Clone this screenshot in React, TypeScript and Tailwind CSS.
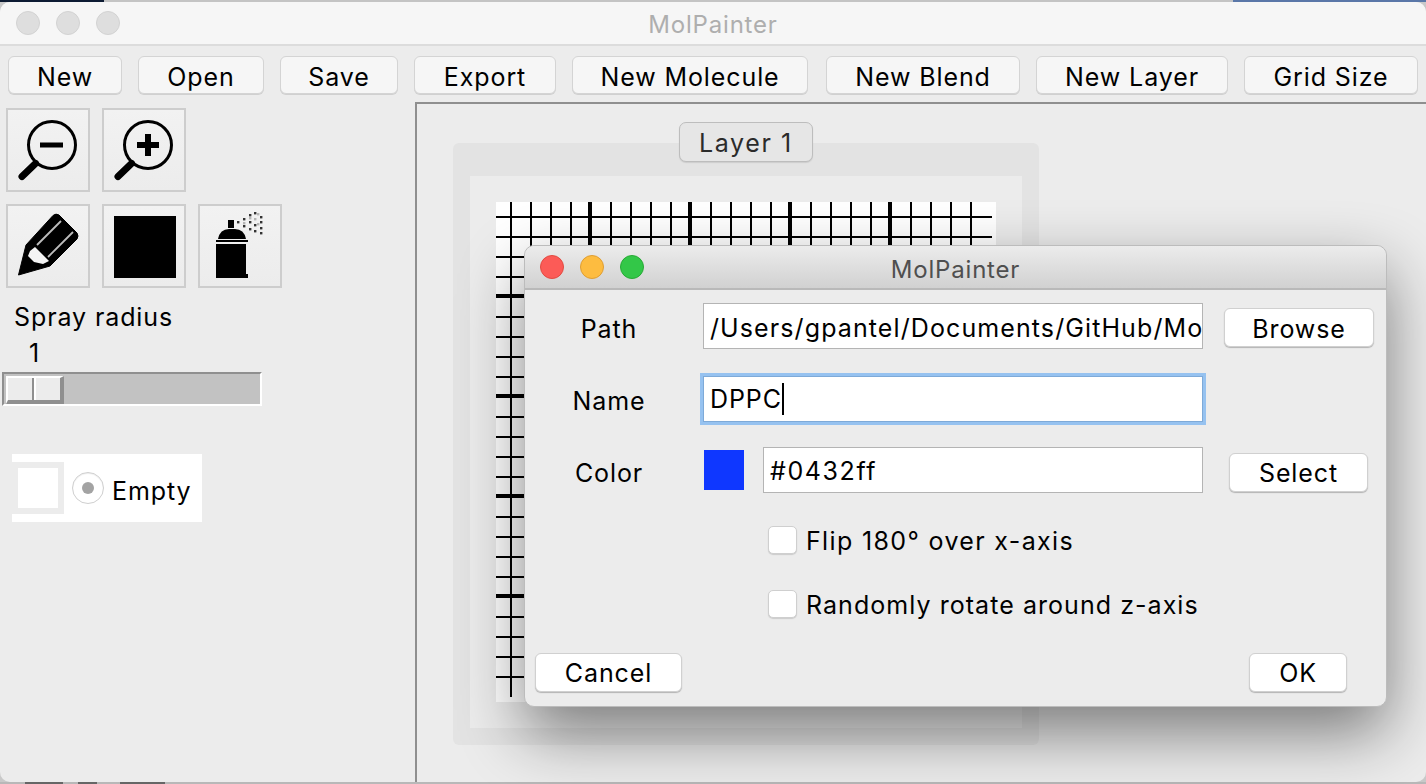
import React from "react";

const font = "font-['Inter','Liberation_Sans',sans-serif]";

function ToolBtn({ label, w, mr }: { label: string; w: string; mr: string }) {
  return (
    <div className={`${w} ${mr} h-[38px] shrink-0 rounded-[6px] border border-[#d4d4d4] bg-[#f6f6f6] shadow-[0_1px_0_#d0d0d0] flex items-center justify-center pt-[6px] text-black`}>
      {label}
    </div>
  );
}

function IconBox({ children }: { children: React.ReactNode }) {
  return (
    <div className="w-[84px] h-[84px] shrink-0 border-2 border-[#cdcdcd] bg-gradient-to-b from-[#f2f2f2] to-[#ececec]">
      <svg viewBox="2 2 80 80" className="block w-20 h-20">{children}</svg>
    </div>
  );
}

function Magnifier({ plus }: { plus?: boolean }) {
  return (
    <g>
      <circle cx="46" cy="37" r="23.5" fill="none" stroke="#000" strokeWidth="3" />
      <path d="M32 53 L27 58" stroke="#000" strokeWidth="3.5" />
      <path d="M29 56 L16 68.5" stroke="#000" strokeWidth="7" strokeLinecap="round" />
      {plus ? (
        <path d="M35 37 H57 M46 26 V48" stroke="#000" strokeWidth="6" />
      ) : (
        <rect x="34" y="34.5" width="23" height="5" fill="#000" />
      )}
    </g>
  );
}

function Pencil() {
  return (
    <g>
      <path d="M12.5 71 L20 41 L47 11.5 Q50 9 53 11 L71 29 Q73 32 71 35 L44 62 Z" fill="#000" stroke="#000" strokeWidth="1" strokeLinejoin="round" />
      <path d="M24 47 L29 43 L43 57 L37 60 L28 58 L22 52 Z" fill="#f4f4f4" />
      <path d="M31 41 L55 17 M42 53 L67 28" stroke="#bdbdbd" strokeWidth="1.8" />
    </g>
  );
}

function Spray() {
  const dark: [number, number][] = [[40, 18], [46, 15], [46, 22], [52, 11], [52, 18], [52, 25], [57, 9], [57, 21], [57, 27], [63, 13], [63, 18], [63, 24], [63, 29]];
  const light: [number, number][] = [[57, 15], [52, 14], [46, 19], [60, 10], [60, 20]];
  return (
    <g>
      <rect x="30" y="16" width="6" height="8" fill="#000" />
      <path d="M20 35 Q22 25 31 25 H37 Q46 25 48 35 Z" fill="#000" />
      <rect x="18" y="36" width="32" height="2" fill="#000" />
      <path d="M18 40 H48 V70 H50 V74 H18 Z" fill="#000" />
      {dark.map(([x, y]) => <rect key={`d${x}-${y}`} x={x - 1} y={y - 1} width="2.4" height="2.4" fill="#333" />)}
      {light.map(([x, y]) => <rect key={`l${x}-${y}`} x={x - 1} y={y - 1} width="2.4" height="2.4" fill="#b5b5b5" />)}
    </g>
  );
}

function Grid() {
  const idx = Array.from({ length: 24 }, (_, i) => i);
  const thin = idx.filter((i) => (i + 1) % 5 !== 0);
  const thick = idx.filter((i) => (i + 1) % 5 === 0);
  return (
    <svg viewBox="0 0 500 500" className="block w-[500px] h-[500px] bg-white">
      {thin.map((i) => (
        <line key={`v${i}`} x1={15 + 20 * i} x2={15 + 20 * i} y1="0" y2="495" stroke="#000" strokeWidth="2" />
      ))}
      {thick.map((i) => (
        <line key={`V${i}`} x1={14 + 20 * i} x2={14 + 20 * i} y1="0" y2="495" stroke="#000" strokeWidth="4" />
      ))}
      {thin.map((i) => (
        <line key={`h${i}`} y1={15 + 20 * i} y2={15 + 20 * i} x1="0" x2="496" stroke="#000" strokeWidth="2" />
      ))}
      {thick.map((i) => (
        <line key={`H${i}`} y1={14 + 20 * i} y2={14 + 20 * i} x1="0" x2="496" stroke="#000" strokeWidth="4" />
      ))}
    </svg>
  );
}

function DlgBtn({ label, w, pt }: { label: string; w: string; pt: string }) {
  return (
    <div className={`${w} ${pt} h-[39px] shrink-0 rounded-[6px] border border-[#d0d0d0] bg-white shadow-[0_1px_1px_#b4b4b4] flex items-center justify-center text-black`}>
      {label}
    </div>
  );
}

function Light({ c, b }: { c: string; b: string }) {
  return <div className={`w-6 h-6 rounded-full border ${c} ${b}`} />;
}

function Check({ label, mt, track }: { label: string; mt: string; track: string }) {
  return (
    <div className={`flex items-center ${mt} pl-[243px]`}>
      <div className="w-[29px] h-[28px] rounded-[5px] border border-[#cfcfcf] bg-white shadow-[0_1px_1px_#cccccc]" />
      <span className={`ml-[9px] pt-1 text-black ${track}`}>{label}</span>
    </div>
  );
}

export default function App() {
  return (
    <div className={`relative w-[1426px] h-[784px] overflow-hidden bg-[#c9c9c9] flex flex-col text-[25px] leading-none tracking-[0.9px] ${font}`}>
      <div className="flex h-[2px] shrink-0">
        <div className="w-[104px] bg-[#0d1b33]" />
        <div className="flex-1 bg-[#c4c4c4]" />
        <div className="w-[193px] bg-[#5a77a8]" />
      </div>
      <div className="flex-1 min-h-0 flex flex-col rounded-t-[10px] rounded-b-[10px] bg-[#ececec] overflow-hidden">
        {/* title bar */}
        <div className="h-[44px] shrink-0 flex items-center relative bg-[#f6f6f6] border-b-2 border-[#dcdcdc]">
          <div className="flex gap-4 pl-4">
            <Light c="bg-[#dedede]" b="border-[#d2d2d2]" />
            <Light c="bg-[#dedede]" b="border-[#d2d2d2]" />
            <Light c="bg-[#dedede]" b="border-[#d2d2d2]" />
          </div>
          <div className="absolute inset-0 flex items-center justify-center pt-1 text-[#aeaeae] text-[24px] tracking-[0.8px]">MolPainter</div>
        </div>
        {/* toolbar */}
        <div className="h-[56px] shrink-0 flex items-center pl-2 pt-[1px]">
          <ToolBtn label="New" w="w-[114px]" mr="mr-4" />
          <ToolBtn label="Open" w="w-[126px]" mr="mr-4" />
          <ToolBtn label="Save" w="w-[118px]" mr="mr-4" />
          <ToolBtn label="Export" w="w-[142px]" mr="mr-4" />
          <ToolBtn label="New Molecule" w="w-[236px]" mr="mr-[18px]" />
          <ToolBtn label="New Blend" w="w-[194px]" mr="mr-4" />
          <ToolBtn label="New Layer" w="w-[192px]" mr="mr-4" />
          <ToolBtn label="Grid Size" w="w-[174px]" mr="mr-0" />
        </div>
        {/* main */}
        <div className="flex-1 min-h-0 flex">
          {/* sidebar */}
          <div className="w-[415px] shrink-0 pt-[6px] text-black">
            <div className="flex gap-3 pl-[6px]">
              <IconBox><Magnifier /></IconBox>
              <IconBox><Magnifier plus /></IconBox>
            </div>
            <div className="flex gap-3 pl-[6px] mt-3">
              <IconBox><Pencil /></IconBox>
              <IconBox><rect x="12" y="12" width="62" height="62" fill="#000" /></IconBox>
              <IconBox><Spray /></IconBox>
            </div>
            <div className="pl-[14px] mt-[17px] h-[24px] flex items-center">Spray radius</div>
            <div className="pl-[29px] mt-[12px] h-[24px] flex items-center">1</div>
            {/* slider */}
            <div className="ml-[2px] mt-[7px] w-[260px] h-[34px] border-t-2 border-l-2 border-t-[#8f8f8f] border-l-[#8f8f8f] border-b-2 border-r-2 border-b-white border-r-white bg-[#c2c2c2] pl-[2px] pt-[2px]">
              <div className="w-[58px] h-[28px] flex border-t-2 border-l-2 border-t-white border-l-white border-b-[4px] border-r-[4px] border-b-[#8f8f8f] border-r-[#8f8f8f] bg-[#ececec]">
                <div className="w-[26px] border-r-2 border-r-[#8f8f8f]" />
                <div className="w-[2px] bg-white" />
              </div>
            </div>
            {/* list */}
            <div className="ml-3 mt-[48px] w-[190px] h-[68px] bg-white flex items-center">
              <div className="w-[52px] h-[52px] bg-[#ececec] flex items-center justify-center">
                <div className="w-10 h-10 bg-white" />
              </div>
              <div className="ml-2 w-8 h-8 rounded-full border border-[#cfcfcf] bg-white flex items-center justify-center shadow-[inset_0_1px_1px_#eeeeee]">
                <div className="w-3 h-3 rounded-full bg-[#a3a3a3]" />
              </div>
              <span className="ml-2 pt-[6px]">Empty</span>
            </div>
          </div>
          {/* canvas */}
          <div className="flex-1 border-t-2 border-l-2 border-[#8f8f8f] pl-9 pt-[39px]">
            <div className="relative w-[586px] h-[602px] rounded-[6px] bg-[#e3e3e3] pl-[17px] pt-[33px]">
              <div className="absolute left-[226px] -top-[21px] w-[134px] h-[40px] rounded-[7px] border border-[#bdbdbd] bg-[#e6e6e6] shadow-[0_1px_1px_#cccccc] flex items-center justify-center pt-[2px] text-[#2b2b2b] tracking-[1.6px]">Layer 1</div>
              <div className="w-[552px] h-[552px] bg-[#ececec] pl-[26px] pt-[26px]">
                <Grid />
              </div>
            </div>
          </div>
        </div>
      </div>
      {/* desktop showing under the window */}
      <div className="h-[2px] shrink-0 flex bg-[#b8b8b8]">
        <div className="ml-[25px] w-[38px] bg-[#666666]" />
        <div className="ml-[15px] w-[19px] bg-[#666666]" />
        <div className="ml-[23px] w-[45px] bg-[#666666]" />
      </div>

      {/* dialog window */}
      <div className="absolute left-[524px] top-[245px] w-[863px] h-[462px] rounded-[10px] bg-[#ececec] border border-[#bcbcbc] shadow-[0_26px_64px_rgba(0,0,0,0.48)] text-black">
        <div className="relative h-[44px] rounded-t-[10px] border-b-2 border-[#b9b9b9] bg-gradient-to-b from-[#ececec] to-[#d1d1d1] flex items-center gap-4 pl-[15px]">
          <Light c="bg-[#fc5b57]" b="border-[#e24b41]" />
          <Light c="bg-[#fdbc40]" b="border-[#df9e33]" />
          <Light c="bg-[#33c748]" b="border-[#27aa35]" />
          <div className="absolute inset-0 flex items-center justify-center pt-[6px] text-[#4f4f4f] text-[24px] tracking-[0.8px]">MolPainter</div>
        </div>
        {/* path */}
        <div className="flex items-center pl-[23px] mt-[13px] h-[46px]">
          <div className="w-[122px] shrink-0 text-center pt-[6px]">Path</div>
          <div className="ml-[33px] w-[500px] shrink-0 h-[46px] border border-[#b4b4b4] bg-white pl-[6px] pt-1 flex items-center whitespace-nowrap tracking-[1.1px]">/Users/gpantel/Documents/GitHub/Mo</div>
          <div className="ml-[21px] mt-[2px]"><DlgBtn label="Browse" w="w-[150px]" pt="pt-1" /></div>
        </div>
        {/* name */}
        <div className="flex items-center pl-[23px] mt-[27px] h-[46px]">
          <div className="w-[122px] shrink-0 text-center pt-1">Name</div>
          <div className="ml-[33px] w-[500px] h-[46px] border border-[#7eaad8] bg-white ring-[3px] ring-[#96c2f0] pl-[6px] flex items-center">
            DPPC<span className="inline-block w-[2px] h-[32px] bg-black" />
          </div>
        </div>
        {/* color */}
        <div className="flex items-center pl-[23px] mt-[25px] h-[46px]">
          <div className="w-[122px] shrink-0 text-center pt-[6px]">Color</div>
          <div className="ml-[34px] w-10 h-10 bg-[#0f37ff]" />
          <div className="ml-[19px] w-[440px] h-[46px] border border-[#b4b4b4] bg-white pl-[6px] pt-[2px] flex items-center tracking-[1.6px]">#0432ff</div>
          <div className="ml-[26px] mt-[5px]"><DlgBtn label="Select" w="w-[139px]" pt="pt-[2px]" /></div>
        </div>
        <Check label="Flip 180° over x-axis" mt="mt-[32px]" track="tracking-[1.35px]" />
        <Check label="Randomly rotate around z-axis" mt="mt-[35px]" track="tracking-[1.05px]" />
        <div className="flex justify-between pl-[10px] pr-[39px] mt-[35px]">
          <DlgBtn label="Cancel" w="w-[147px]" pt="pt-[2px]" />
          <DlgBtn label="OK" w="w-[98px]" pt="pt-[2px]" />
        </div>
      </div>
    </div>
  );
}
